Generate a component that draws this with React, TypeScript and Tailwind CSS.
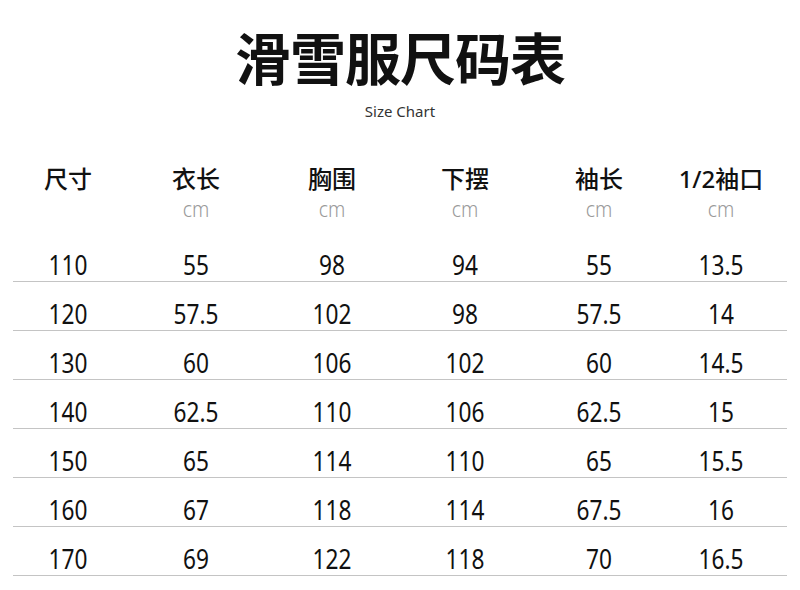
const columns = [
  { label: "尺寸", unit: "" },
  { label: "衣长", unit: "cm" },
  { label: "胸围", unit: "cm" },
  { label: "下摆", unit: "cm" },
  { label: "袖长", unit: "cm" },
  { label: "1/2袖口", unit: "cm" },
];

const rows = [
  ["110", "55", "98", "94", "55", "13.5"],
  ["120", "57.5", "102", "98", "57.5", "14"],
  ["130", "60", "106", "102", "60", "14.5"],
  ["140", "62.5", "110", "106", "62.5", "15"],
  ["150", "65", "114", "110", "65", "15.5"],
  ["160", "67", "118", "114", "67.5", "16"],
  ["170", "69", "122", "118", "70", "16.5"],
];

const grid = "grid grid-cols-[110px_146px_126px_140px_128px_116px]";
const cjk = "font-['Noto_Sans','Noto_Sans_CJK_SC',sans-serif]";

const App = () => (
  <div className={`w-[800px] h-[590px] bg-white text-[#111] ${cjk}`}>
    <h1 className="pt-[28px] text-center text-[56px] font-bold leading-[60px] tracking-[-1px]">滑雪服尺码表</h1>
    <p className="mt-[13px] text-center text-[15px] leading-[20px] text-[#333]">Size Chart</p>

    <div className="mx-[13px] mt-[44px]">
      <div className={grid}>
        {columns.map((c) => (
          <div key={c.label} className="flex flex-col items-center">
            <span className="text-[24px] font-medium leading-[28px]">{c.label}</span>
            <span className="mt-[5px] h-[20px] scale-x-[0.88] text-[22px] font-light leading-[20px] text-[#9a9a9a]">
              {c.unit}
            </span>
          </div>
        ))}
      </div>

      <div className="mt-[15px]">
        {rows.map((r) => (
          <div key={r[0]} className={`${grid} h-[49px] border-b border-[#c4c4c4] pt-[17px]`}>
            {r.map((v, i) => (
              <span key={i} className="scale-x-[0.81] text-center text-[28px] font-normal leading-[28px]">
                {v}
              </span>
            ))}
          </div>
        ))}
      </div>
    </div>
  </div>
);

export default App;
